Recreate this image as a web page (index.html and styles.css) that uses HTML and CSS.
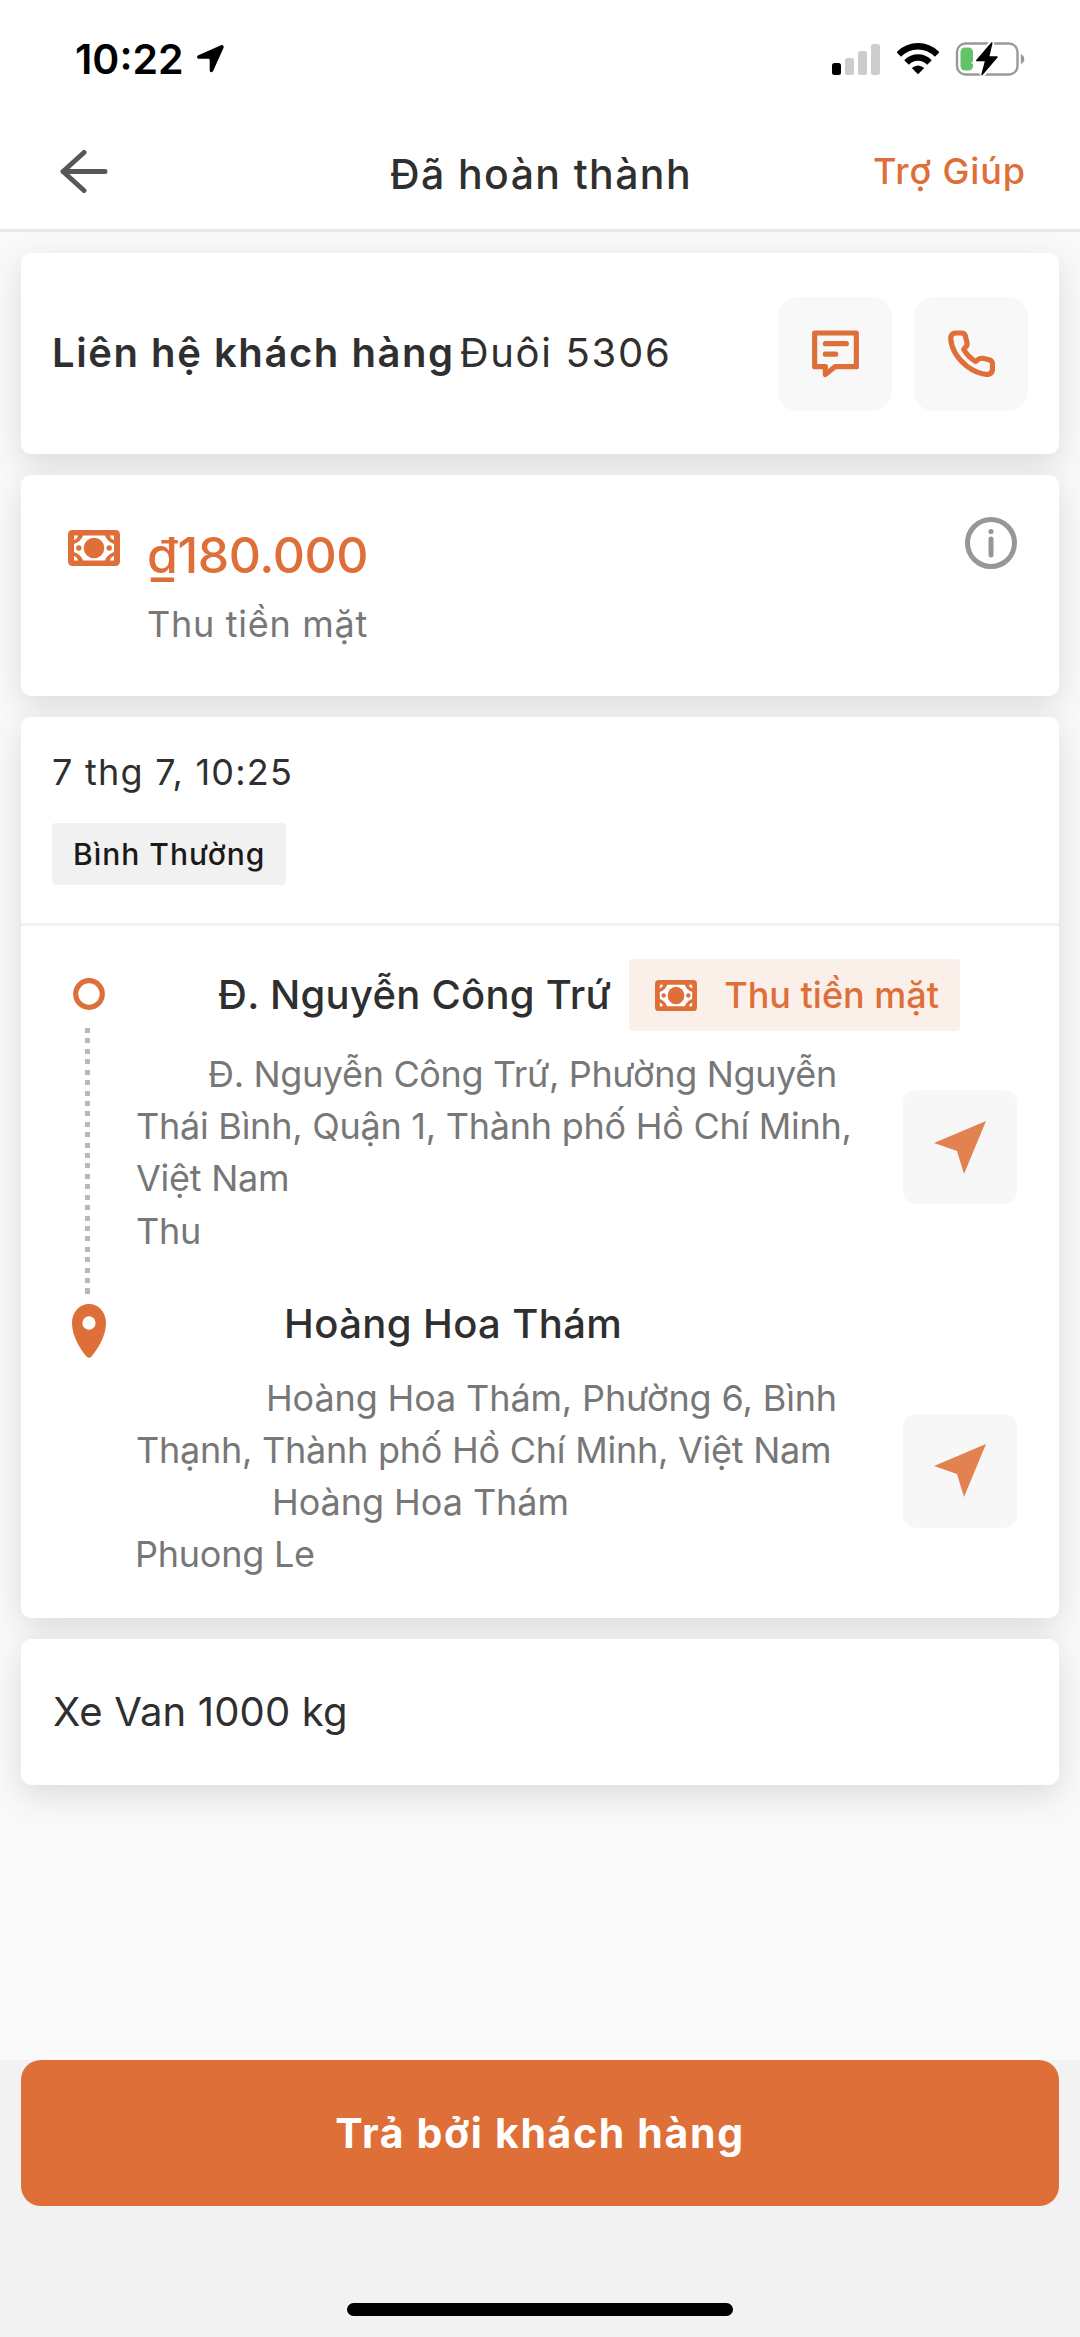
FILE: index.html
```
<!DOCTYPE html>
<html lang="vi">
<head>
<meta charset="utf-8">
<title>Đã hoàn thành</title>
<link rel="stylesheet" href="styles.css">
</head>
<body>
<svg width="0" height="0" class="defs" aria-hidden="true">
  <symbol id="money" viewBox="0 0 52 36">
    <rect width="52" height="36" rx="4.5" fill="#de6f39"/>
    <path d="M15 5.500H37Q39 11.500 46 14V22Q39 24.500 37 30.500H15Q13 24.500 6 22V14Q13 11.500 15 5.500Z" fill="#fff"/>
    <path d="M6 5.500H10Q9.500 9 6 10ZM46 5.500H42Q42.500 9 46 10ZM6 30.500H10Q9.500 27 6 26ZM46 30.500H42Q42.500 27 46 26Z" fill="#fff"/>
    <circle cx="26" cy="18" r="10.300" fill="#de6f39"/>
    <circle cx="10.800" cy="18" r="2.700" fill="#de6f39"/>
    <circle cx="41.200" cy="18" r="2.700" fill="#de6f39"/>
  </symbol>
  <symbol id="nav" viewBox="0 0 52 53">
    <path d="M52 0 0 22 23 30 30 53Z" fill="#e18250"/>
  </symbol>
</svg>

<div class="screen">
  <header class="header">
    <div class="status">
      <div class="status-left">
        <span class="time">10:22</span>
        <svg width="28" height="30" viewBox="0 0 28 30"><path d="M25.500 1 1.800 11.500Q0 13.800 2.500 14.800H12.500Q13.700 14.800 13.700 16V26.500Q14.700 29.800 17 27.200L27.700 3.500Q28 .4 25.500 1Z" fill="#000"/></svg>
      </div>
      <div class="status-right">
        <svg width="48" height="31" viewBox="0 0 48 31">
          <rect x="0" y="19" width="9" height="12" rx="2.500" fill="#000"/>
          <g fill="#ccc"><rect x="13" y="14" width="9" height="17" rx="2.500"/><rect x="26" y="7" width="9" height="24" rx="2.500"/><rect x="39" y="0" width="9" height="31" rx="2.500"/></g>
        </svg>
        <svg class="wifi" width="42" height="32" viewBox="897 43 42 32">
          <g fill="none" stroke="#000" stroke-width="6.500"><path d="M898.800 54.500Q907 46.300 918 46.300T937.200 54.500"/><path d="M906.500 62.500Q911.500 57.600 918 57.600T929.500 62.500"/></g>
          <path d="M911.800 68Q918 62.800 924.200 68L918 74.300Z" fill="#000"/>
        </svg>
        <svg width="70" height="36" viewBox="955 41 70 36">
          <rect x="957" y="43.500" width="60.500" height="31" rx="8.500" fill="none" stroke="#999" stroke-width="2.400"/>
          <path d="M1020.800 54Q1024.300 55.500 1024.300 59T1020.800 64Z" fill="#999"/>
          <rect x="960.500" y="47.500" width="12.500" height="23" rx="4.500" fill="#62c466"/>
          <path d="M992 42.300 976.300 61H985.500L981.800 75.300 997.600 56.700H988.700Z" fill="#fff" stroke="#fff" stroke-width="5"/>
          <path d="M991.800 43 976.800 60.600H985.700L982 74.600 997 57H988.500Z" fill="#000" stroke="#000" stroke-width="1.500" stroke-linejoin="round"/>
        </svg>
      </div>
    </div>
    <nav class="navbar">
      <svg class="back" width="48" height="43" viewBox="0 0 48 43"><path d="M45 21.500H3M24 2.500 3 21.500 24 40.500" fill="none" stroke="#575757" stroke-width="5" stroke-linecap="round" stroke-linejoin="round"/></svg>
      <h1 class="title">Đã hoàn thành</h1>
      <a class="help">Trợ Giúp</a>
    </nav>
  </header>

  <main class="content">
    <section class="card contact">
      <p class="contact-text"><b>Liên hệ khách hàng</b><span>Đuôi 5306</span></p>
      <div class="contact-actions">
        <button class="square">
          <svg width="47" height="47" viewBox="333 270 141 141"><path d="M341 279H466V380H402L373 403.500V380H341ZM373 311H436M373 342.500H404" fill="none" stroke="#de6f39" stroke-width="15.500" stroke-linecap="round" stroke-linejoin="round"/></svg>
        </button>
        <button class="square">
          <svg width="47" height="47" viewBox="741 270 141 141"><path d="M763 279H782Q791 279 793 288L798 308Q800 315 794 321L788 328Q800 350 824 365L832 358Q837 354 845 355L864 359Q874 362 874.500 371V389Q873 402 860 403.500Q828 402 797 378Q752 341 749 295Q749 281 763 279Z" fill="none" stroke="#de6f39" stroke-width="15.500" stroke-linejoin="round"/></svg>
        </button>
      </div>
    </section>

    <section class="card payment">
      <svg class="payment-icon" width="52" height="36"><use href="#money"/></svg>
      <div class="payment-text">
        <p class="amount">₫180.000</p>
        <p class="method">Thu tiền mặt</p>
      </div>
      <svg class="info" width="52" height="52" viewBox="0 0 52 52"><circle cx="26" cy="26" r="23.500" fill="none" stroke="#979797" stroke-width="5"/><circle cx="26" cy="14.500" r="2.600" fill="#979797"/><path d="M26 22V38" stroke="#979797" stroke-width="5" stroke-linecap="round"/></svg>
    </section>

    <section class="card order">
      <div class="order-head">
        <p class="date">7 thg 7, 10:25</p>
        <span class="chip">Bình Thường</span>
      </div>
      <div class="route">
        <div class="stop stop-from">
          <div class="rail">
            <svg width="32" height="32" viewBox="0 0 32 32"><circle cx="16" cy="16" r="13.300" fill="none" stroke="#de6f39" stroke-width="5.200"/></svg>
            <div class="dots"></div>
          </div>
          <div class="stop-body">
            <div class="stop-head">
              <h2 class="stop-title">Đ. Nguyễn Công Trứ</h2>
              <span class="badge"><svg width="42" height="31" viewBox="0 0 52 36" preserveAspectRatio="none"><use href="#money" width="52" height="36"/></svg>Thu tiền mặt</span>
            </div>
            <div class="stop-row">
              <div class="address">
                <p class="line-a">Đ. Nguyễn Công Trứ, Phường Nguyễn</p>
                <p>Thái Bình, Quận 1, Thành phố Hồ Chí Minh,</p>
                <p>Việt Nam</p>
                <p>Thu</p>
              </div>
              <button class="square go"><svg width="52" height="53"><use href="#nav"/></svg></button>
            </div>
          </div>
        </div>
        <div class="stop stop-to">
          <div class="rail">
            <svg width="34" height="54" viewBox="0 0 34 54"><path fill-rule="evenodd" d="M17 0C26.500 0 34 8 34 19C34 33 25 46 19.500 52.500Q17 55 14.500 52.500C9 46 0 33 0 19C0 8 7.500 0 17 0ZM17 12.200A6.600 6.800 0 1 0 17 25.800A6.600 6.800 0 1 0 17 12.200Z" fill="#de6f39"/></svg>
          </div>
          <div class="stop-body">
            <h2 class="stop-title">Hoàng Hoa Thám</h2>
            <div class="stop-row">
              <div class="address">
                <p class="line-b">Hoàng Hoa Thám, Phường 6, Bình</p>
                <p>Thạnh, Thành phố Hồ Chí Minh, Việt Nam</p>
                <p class="line-c">Hoàng Hoa Thám</p>
                <p class="line-d">Phuong Le</p>
              </div>
              <button class="square go"><svg width="52" height="53"><use href="#nav"/></svg></button>
            </div>
          </div>
        </div>
      </div>
    </section>

    <section class="card vehicle"><p>Xe Van 1000 kg</p></section>
  </main>

  <footer class="footer">
    <button class="pay">Trả bởi khách hàng</button>
    <div class="home"></div>
  </footer>
</div>
</body>
</html>
```
FILE: styles.css
```
* { box-sizing: border-box; margin: 0; padding: 0; }

body {
  background: #f2f2f2;
  color: #2f2f2f;
  font-family: Inter, "Noto Sans", sans-serif;
}

svg { display: block; flex: none; }
.defs { display: none; }
button { border: 0; font: inherit; }

.screen {
  width: 1080px;
  height: 2337px;
  display: flex;
  flex-direction: column;
  overflow: hidden;
}

/* Header */
.header { background: #fff; border-bottom: 3px solid #e8e8e8; }

.status {
  height: 118px;
  padding: 0 55px 0 75px;
  display: flex;
  justify-content: space-between;
  align-items: center;
}
.status-left { display: flex; align-items: center; gap: 12px; }
.time { font-size: 41px; font-weight: 600; line-height: 48px; color: #000; }
.status-right { display: flex; align-items: center; }
.wifi { margin: 0 16px 0 17px; }

.navbar {
  height: 111px;
  padding: 0 55px 0 60px;
  display: grid;
  grid-template-columns: 1fr auto 1fr;
  align-items: center;
}
.back { margin-bottom: 5px; }
.title { font-size: 41px; font-weight: 500; line-height: 48px; letter-spacing: 1.4px; padding-right: 3px; }
.help {
  justify-self: end;
  margin: 0 -1px 6px 0;
  font-size: 36px;
  font-weight: 500;
  line-height: 44px;
  letter-spacing: .9px;
  color: #de6f39;
}

/* Cards */
.content {
  height: 1828px;
  padding: 21px;
  display: flex;
  flex-direction: column;
  gap: 21px;
  background: #f9f9f9;
}
.card {
  border-radius: 10px;
  background: #fff;
  box-shadow: 0 10px 32px rgba(0, 0, 0, .12);
}

.square {
  width: 114px;
  height: 114px;
  flex: none;
  display: grid;
  place-items: center;
  border-radius: 20px;
  background: #f8f8f8;
}

.contact {
  height: 201px;
  padding: 0 31px 0 31px;
  display: flex;
  justify-content: space-between;
  align-items: center;
}
.contact-text {
  display: flex;
  gap: 5px;
  margin-bottom: 2px;
  font-size: 40px;
  line-height: 50px;
  letter-spacing: 1.7px;
}
.contact-text b { font-weight: 600; letter-spacing: 1.56px; }
.contact-actions { display: flex; gap: 22px; }

.payment {
  height: 221px;
  padding: 50px 42px 0 47px;
  display: flex;
  align-items: flex-start;
}
.payment-icon { margin: 5px 27px 0 0; }
.payment-text { flex: 1; }
.amount { font-size: 50px; font-weight: 500; line-height: 60px; letter-spacing: -.45px; color: #de6f39; }
.method { margin-top: 13px; font-size: 36px; line-height: 52px; letter-spacing: .72px; color: #777; }
.info { margin-top: -8px; }

.order-head {
  height: 209px;
  padding: 29px 31px 0;
  display: flex;
  flex-direction: column;
  align-items: flex-start;
  border-bottom: 3px solid #f1f1f1;
}
.date { font-size: 36px; line-height: 52px; letter-spacing: 1.25px; }
.chip {
  height: 62px;
  margin-top: 25px;
  padding: 0 21px;
  border-radius: 4px;
  background: #f1f1f1;
  color: #1a1a1a;
  font-size: 30px;
  font-weight: 500;
  line-height: 62px;
  letter-spacing: 1px;
}

/* Route */
.route { padding: 33px 42px 37px 51px; }
.stop { display: flex; gap: 31px; }
.rail { width: 34px; flex: none; display: flex; flex-direction: column; align-items: center; }
.stop-from .rail { padding-top: 19px; }
.stop-to .rail { padding-top: 6px; }
.dots {
  width: 5px;
  flex: 1;
  margin: 18px 3px 0 0;
  background: repeating-linear-gradient(#b8b8b8 0 5px, transparent 5px 10.42px);
}
.stop-body { flex: 1; min-width: 0; }
.stop-from .stop-body { padding-bottom: 41px; }
.stop-head { display: flex; align-items: center; gap: 18px; padding-left: 81px; }
.stop-title { font-size: 40px; font-weight: 500; line-height: 52px; letter-spacing: .26px; white-space: nowrap; }
.stop-to .stop-title { padding-left: 147px; letter-spacing: .4px; }
.badge {
  width: 331px;
  height: 72px;
  padding-left: 26px;
  display: flex;
  align-items: center;
  gap: 27px;
  border-radius: 4px;
  background: #fbefe9;
  color: #de6f39;
  font-size: 36px;
  font-weight: 500;
  white-space: nowrap;
}
.stop-row { display: flex; justify-content: space-between; align-items: flex-start; margin-top: 17px; }
.stop-to .stop-row { margin-top: 22px; }
.address { margin-left: -1px; color: #777; font-size: 36px; line-height: 52.2px; letter-spacing: -.25px; white-space: nowrap; }
.line-a { padding-left: 72px; letter-spacing: -.35px; }
.line-b { padding-left: 130px; letter-spacing: -.13px; }
.line-c { padding-left: 136px; letter-spacing: -.05px; }
.line-d { margin-left: -1px; }
.go { margin-top: 42px; border-radius: 13px; background: #f7f7f7; }

.vehicle {
  height: 146px;
  padding: 0 32px;
  font-size: 40px;
  line-height: 146px;
  letter-spacing: .16px;
}

/* Footer */
.footer {
  flex: 1;
  padding: 0 21px;
  display: flex;
  flex-direction: column;
  align-items: center;
  background: #f2f2f2;
}
.pay {
  width: 100%;
  height: 146px;
  border-radius: 20px;
  background: #de6f39;
  color: #fff;
  font-size: 41px;
  font-weight: 700;
  line-height: 144px;
  letter-spacing: 1.65px;
}
.home { width: 386px; height: 13px; margin-top: 97px; border-radius: 7px; background: #000; }
```
